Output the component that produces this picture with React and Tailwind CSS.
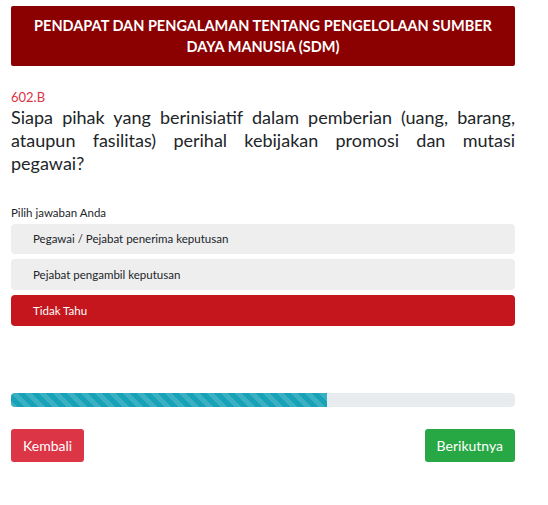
export default function App() {
  return (
    <div className="w-[548px] h-[505px] bg-white font-['Lato',sans-serif]">
      <div className="ml-[11px] w-[504px] pt-[6px]">
        <div className="bg-[#8b0000] rounded-[2px] h-[60px] flex items-center justify-center px-4">
          <p className="text-white font-bold text-[14.5px] leading-[21px] text-center">
            PENDAPAT DAN PENGALAMAN TENTANG PENGELOLAAN SUMBER DAYA MANUSIA (SDM)
          </p>
        </div>
        <div className="mt-[22px] text-[#dc3545] text-[13px] leading-[18px]">602.B</div>
        <p className="text-[#212529] text-[18px] leading-[23px] text-justify">
          Siapa pihak yang berinisiatif dalam pemberian (uang, barang, ataupun fasilitas) perihal kebijakan promosi dan mutasi pegawai?
        </p>
        <div className="mt-[30px] text-[11.5px] leading-[15px] text-[#212529]">Pilih jawaban Anda</div>
        <div className="mt-[4px] flex flex-col gap-[5px]">
          <div className="h-[30px] rounded-[4px] bg-[#efeeef] flex items-center pl-[22px] text-[11.5px] text-[#212529]">
            Pegawai / Pejabat penerima keputusan
          </div>
          <div className="h-[31px] rounded-[4px] bg-[#efeeef] flex items-center pl-[22px] text-[11.5px] text-[#212529]">
            Pejabat pengambil keputusan
          </div>
          <div className="h-[31px] rounded-[4px] bg-[#c4161c] flex items-center pl-[22px] text-[11.5px] text-white">
            Tidak Tahu
          </div>
        </div>
        <div className="mt-[67px] h-[14px] rounded-[4px] bg-[#e9ecef] overflow-hidden">
          <div className="h-full w-[316px] bg-[#17a2b8] bg-[linear-gradient(45deg,rgba(255,255,255,.15)_25%,transparent_25%,transparent_50%,rgba(255,255,255,.15)_50%,rgba(255,255,255,.15)_75%,transparent_75%,transparent)] bg-[length:14px_14px]"></div>
        </div>
        <div className="mt-[22px] flex justify-between">
          <button className="h-[33px] px-[12px] rounded-[3px] bg-[#dc3545] text-white text-[14px]">Kembali</button>
          <button className="h-[33px] px-[12px] rounded-[3px] bg-[#28a745] text-white text-[14px]">Berikutnya</button>
        </div>
      </div>
    </div>
  );
}
